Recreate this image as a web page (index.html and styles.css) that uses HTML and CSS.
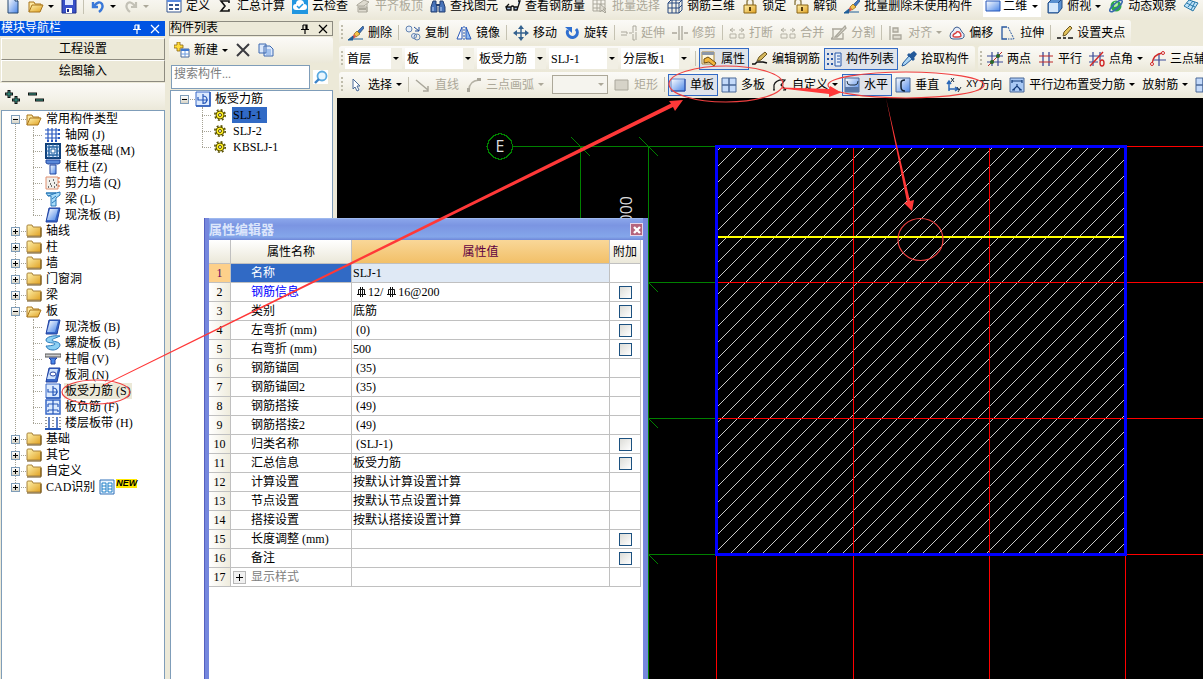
FILE: index.html
```html
<!DOCTYPE html>
<html lang="zh-CN">
<head>
<meta charset="utf-8">
<title>板受力筋</title>
<link rel="stylesheet" href="styles.css">
</head>
<body>
<svg class="defs" aria-hidden="true">
<defs>
<linearGradient id="blue" x1="0" y1="0" x2="1" y2="1"><stop offset="0" stop-color="#fff"/><stop offset="1" stop-color="#4a86e8"/></linearGradient>
<linearGradient id="gold" x1="0" y1="0" x2="1" y2="1"><stop offset="0" stop-color="#fff3b0"/><stop offset="1" stop-color="#e0a020"/></linearGradient>
<symbol id="new" viewBox="0 0 16 16"><path d="M3 0h7l3 3v12H3z" fill="url(#blue)" stroke="#24476f"/><path d="M10 0v3h3" fill="#fff" stroke="#24476f"/></symbol>
<symbol id="open" viewBox="0 0 16 16"><path d="M1 14V4h5l1 2h6v3" fill="#ffe9a0" stroke="#a8741a"/><path d="M1 14l3-7h11l-3 7z" fill="url(#gold)" stroke="#a8741a"/></symbol>
<symbol id="save" viewBox="0 0 16 16"><path d="M1 1h14v14H1z" fill="#3850c8" stroke="#1c2c88"/><path d="M4 1h8v6H4z" fill="#dfe8ff"/><path d="M5 10h6v5H5z" fill="#fff"/><path d="M6 11h2v3H6z" fill="#1c2c88"/></symbol>
<symbol id="undo" viewBox="0 0 16 16"><path d="M3 4v5h5M4 8q5-6 8-2q2 4-3 8" fill="none" stroke="#3a78d8" stroke-width="2.4"/></symbol>
<symbol id="redo" viewBox="0 0 16 16"><path d="M13 4v5H8M12 8Q7 2 4 6q-2 4 3 8" fill="none" stroke="#c3c1b6" stroke-width="2.2"/></symbol>
<symbol id="form" viewBox="0 0 16 16"><path d="M1 1h14v13H1z" fill="#fff" stroke="#35558f"/><path d="M1 1h14v3H1z" fill="#5b8be0"/><path d="M3 7h4M9 7h4M3 11h4M9 11h4" stroke="#35558f" stroke-width="2"/></symbol>
<symbol id="sigma" viewBox="0 0 16 16"><path d="M12 5V3H4l4 5-4 5h8v-2" fill="none" stroke="#111" stroke-width="1.6"/></symbol>
<symbol id="cloud" viewBox="0 0 16 16"><path d="M0 0h16v16H0z" fill="#2196e0"/><path d="M4 12a3 3 0 0 1 0-6 4 4 0 0 1 8 0 3 3 0 0 1 0 6z" fill="#fff"/><path d="M5 8l2 2 4-4" fill="none" stroke="#2196e0" stroke-width="1.5"/></symbol>
<symbol id="flush" viewBox="0 0 16 16"><path d="M2 7l7-5 5 2-5 4H2zM3 9h9v5H3zM12 6v8" fill="#dedbd0" stroke="#aaa79b"/><path d="M4 11h7" stroke="#aaa79b" stroke-width="2"/></symbol>
<symbol id="find" viewBox="0 0 16 16"><path d="M3 3h3v3l1 3v5H1V9zM10 3h3l2 6v5H9V9l1-3z" fill="#4772b8" stroke="#243f70"/><path d="M6 7h4" stroke="#243f70" stroke-width="2"/><path d="M3 9v4M11 9v4" stroke="#bcd2f8"/></symbol>
<symbol id="glasses" viewBox="0 0 16 16"><path d="M1 9h5v3H2zM9 9h4l-1 3H9zM6 9q1.500-2 3 0M1 9l3-3M13 9l2-6h-2" fill="#9ab6e0" stroke="#111" stroke-width="1.300"/></symbol>
<symbol id="batch" viewBox="0 0 16 16"><path d="M1 2h12v11H1zM1 6h12M1 10h12M5 2v11M9 2v11" fill="none" stroke="#aaa79b"/><path d="M8 6v8l2-2 3 3 1-1-3-3h3z" fill="#dedbd0" stroke="#aaa79b"/></symbol>
<symbol id="cube3" viewBox="0 0 16 16"><path d="M1 5l3-3h11v10l-3 3H1zM1 5h11v10M12 5l3-3M1 10h11l3-3M5 2v13M9 2v13" fill="none" stroke="#28487e"/></symbol>
<symbol id="lock" viewBox="0 0 16 16"><path d="M5 7V4q0-3 3-3t3 3v3" fill="none" stroke="#9a8a5a" stroke-width="1.600"/><path d="M2 7h12v8H2z" fill="url(#gold)" stroke="#8a6414"/><path d="M8 9v4" stroke="#5a4010" stroke-width="2"/></symbol>
<symbol id="unlock" viewBox="0 0 16 16"><path d="M2 7V4q0-3 3-3t3 3v3" fill="none" stroke="#9a8a5a" stroke-width="1.600"/><path d="M4 7h11v8H4z" fill="url(#gold)" stroke="#8a6414"/><path d="M9 9v4" stroke="#5a4010" stroke-width="2"/></symbol>
<symbol id="brush" viewBox="0 0 16 16"><path d="M15 1L9 7l2 2 5-6z" fill="#3f74c0" stroke="#24476f" stroke-width=".7"/><path d="M9 6L6 9l2 3 4-3z" fill="#f5c24a" stroke="#8a6414" stroke-width=".7"/><path d="M6 9l-2 3 1 2 3-2z" fill="#e05a4a"/><path d="M0 15l5-4v4zM6 14h9" fill="#1f5f98" stroke="#1f5f98"/></symbol>
<symbol id="plane" viewBox="0 0 16 16"><path d="M1 3h14v10H1z" fill="url(#blue)" stroke="#2858b8"/></symbol>
<symbol id="topv" viewBox="0 0 16 16"><path d="M1 5l4-4h10v9l-4 5H1z" fill="#5a90d0" stroke="#234a80"/><path d="M2 5h9v9H2z" fill="#d6e8fb"/><path d="M11 5l4-4" stroke="#234a80"/></symbol>
<symbol id="orbit" viewBox="0 0 16 16"><circle cx="8" cy="8" r="5.500" fill="#2ea84a"/><path d="M6 4q4-1 4 2t-4 3z" fill="#b6f0a0"/><ellipse cx="8" cy="8" rx="8" ry="2.500" fill="none" stroke="#3a68b0" stroke-width="1.500" transform="rotate(-42 8 8)"/></symbol>
<symbol id="gem" viewBox="0 0 16 16"><path d="M1 8l5-6 9 3-5 8zM3.500 5l8.500 4M5 9l5-6M8 12l4-8" fill="#bfe2f8" stroke="#2878a8"/></symbol>
<symbol id="copy" viewBox="0 0 16 16"><circle cx="4" cy="4" r="3" fill="#e5edf8" stroke="#6484b0"/><circle cx="9" cy="11" r="2.500" fill="#e5edf8" stroke="#6484b0"/><circle cx="12" cy="12" r="3" fill="none" stroke="#6484b0"/><path d="M9 2l5 4M14 2v4h-4" stroke="#24509a" fill="none"/></symbol>
<symbol id="mirror" viewBox="0 0 16 16"><path d="M6 2v12H1z" fill="#fff" stroke="#2858b8"/><path d="M10 2v12h5z" fill="#8cb8f0" stroke="#2858b8"/><path d="M8 1v14" stroke="#2858b8" stroke-dasharray="2 1"/></symbol>
<symbol id="move" viewBox="0 0 16 16"><path d="M8 2v12M2 8h12" stroke="#34618e" stroke-width="1.500"/><path d="M8 0l3 4H5zM8 16l3-4H5zM0 8l4-3v6zM16 8l-4-3v6z" fill="#34618e"/></symbol>
<symbol id="rotate" viewBox="0 0 16 16"><path d="M4 5a5 5 0 1 0 8-1" fill="none" stroke="#2f6fd0" stroke-width="3"/><path d="M1 2h7v6z" fill="#2f6fd0"/></symbol>
<symbol id="extend" viewBox="0 0 16 16"><path d="M0 7h6v3H0M8 8h3M12 1h3v14h-3z" fill="none" stroke="#aaa79b" stroke-dasharray="8 1"/></symbol>
<symbol id="trim" viewBox="0 0 16 16"><path d="M7 1v14M10 1v14M0 8h5M12 8h4" fill="none" stroke="#aaa79b" stroke-width="1.300"/></symbol>
<symbol id="split" viewBox="0 0 16 16"><path d="M1 9h6v4H1zM10 9h5v4h-5zM1 5h5M10 5h5M4 3L1 5l3 2M12 3l3 2-3 2" fill="none" stroke="#b5b2a5"/></symbol>
<symbol id="cut" viewBox="0 0 16 16"><path d="M1 4h10M2 4v8l-2 2h12V8M4 12L14 1l1 2-9 9z" fill="none" stroke="#aaa79b" stroke-width="1.300"/></symbol>
<symbol id="align" viewBox="0 0 16 16"><path d="M2 1v14M5 3h5v4H5zM5 10h8v4H5z" fill="#dedbd0" stroke="#aaa79b" stroke-width="1.300"/></symbol>
<symbol id="offset" viewBox="0 0 16 16"><path d="M1 11q0-4 3-5 1-4 4-4t5 5q3 2 2 5-1 2-5 2H4q-3 0-3-3z" fill="#e8eef8" stroke="#3c5c90"/><path d="M4 11q0-2 3-3 1-2 3-1t2 4q-1 1-3 1H6q-2 0-2-1z" fill="#fff" stroke="#d84040" stroke-width="1.400"/></symbol>
<symbol id="stretch" viewBox="0 0 16 16"><path d="M7 2H2v12h5" fill="none" stroke="#2858a0" stroke-width="1.300"/><path d="M8 2l6 12H8" fill="none" stroke="#2858a0" stroke-dasharray="2 1"/></symbol>
<symbol id="pencil" viewBox="0 0 16 16"><path d="M0 13h4M6 13h3M11 13h5" stroke="#111" stroke-width="1.500"/><path d="M6 11l1-4 6-6 2 2-6 7z" fill="#e5c45c" stroke="#6a5520"/></symbol>
<symbol id="props" viewBox="0 0 16 16"><path d="M1 1h12v12H1z" fill="#fff8e0" stroke="#a8843a"/><path d="M1 1h12v3H1z" fill="#8c96a8"/><path d="M3 8l4-2 3 2 5 4-2 3-5-4-5 1z" fill="#f2b53a" stroke="#6d4a10"/></symbol>
<symbol id="editbar" viewBox="0 0 16 16"><path d="M0 13h3l2-2h6l4 1" stroke="#111" fill="none" stroke-width="1.500"/><path d="M5 10l2-4 6-5 2 2-6 6z" fill="#d4b75c" stroke="#6a5520"/></symbol>
<symbol id="complist" viewBox="0 0 16 16"><path d="M1 3h2M1 8h2M1 13h2M5 3h2M5 8h2M5 13h2" stroke="#2858a8" stroke-width="2"/><path d="M9 2h6v13H9z" fill="#e5eefa" stroke="#2858a8"/><path d="M11 5h3M11 8h3M11 11h3" stroke="#2858a8"/></symbol>
<symbol id="dropper" viewBox="0 0 16 16"><path d="M9 3l4-3 3 3-3 4 1 1-2 2-6-6 2-2z" fill="#245a9a"/><path d="M8 5L2 12l-1 3 3-1 7-6z" fill="#a8d4f4" stroke="#245a9a"/></symbol>
<symbol id="ax2" viewBox="0 0 16 16"><path d="M5 1v14M11 1v14M0 5h16M0 11h16" stroke="#3a4a98" stroke-width="1.200"/><path d="M1 15L15 1" stroke="#c02828"/><circle cx="5" cy="11" r="2" fill="#286828"/><circle cx="11" cy="5" r="2" fill="#286828"/></symbol>
<symbol id="axp" viewBox="0 0 16 16"><path d="M5 1v14M11 1v14" stroke="#3a4a98" stroke-width="1.300"/><path d="M1 5h14M1 11h14" stroke="#c02828" stroke-width="1.200"/></symbol>
<symbol id="axa" viewBox="0 0 16 16"><path d="M4 1v14M11 1v9M0 5h15M0 11h9" stroke="#3a4a98" stroke-width="1.200"/><path d="M1 15L14 1" stroke="#d02828" stroke-width="1.400"/><ellipse cx="13" cy="12" rx="2" ry="3" fill="none" stroke="#d02828" stroke-width="1.400"/></symbol>
<symbol id="ax3" viewBox="0 0 16 16"><path d="M9 3v12M3 9h13" stroke="#3a4a98" stroke-width="1.200"/><path d="M2 13Q3 3 13 2" fill="none" stroke="#d02828" stroke-width="1.400"/><circle cx="2" cy="13" r="1.500" fill="#fff" stroke="#d02828"/><circle cx="13" cy="2" r="1.500" fill="#fff" stroke="#d02828"/></symbol>
<symbol id="cursor" viewBox="0 0 16 16"><path d="M5 2v10l2-2 2 4 2-1-2-4h3z" fill="#fff" stroke="#4a6a98"/></symbol>
<symbol id="line" viewBox="0 0 16 16"><path d="M1 3l12 10M13 9v5H8" fill="none" stroke="#aaa79b" stroke-width="1.500"/></symbol>
<symbol id="arc" viewBox="0 0 16 16"><path d="M3 13Q3 4 13 3" fill="none" stroke="#b5b2a5" stroke-width="1.600"/><path d="M1 11h3v4H1zM11 1h4v3h-4z" fill="#aaa79b"/></symbol>
<symbol id="rect" viewBox="0 0 16 16"><path d="M1 3h13v10H1z" fill="#d6d3c8" stroke="#aaa79b"/></symbol>
<symbol id="single" viewBox="0 0 16 16"><path d="M1 2h14v12H1z" fill="url(#blue)" stroke="#6484c8"/><path d="M15 2v12H1" fill="none" stroke="#1c40a0"/></symbol>
<symbol id="multi" viewBox="0 0 16 16"><path d="M1 1h14v14H1z" fill="#c4dafa" stroke="#4a6898"/><path d="M8 1v14M1 8h14" stroke="#4a6898" stroke-width="1.500"/></symbol>
<symbol id="custom" viewBox="0 0 16 16"><path d="M2 13V8q2-6 11-5l-4 5 5 5M3 13H1M14 13h-3" fill="none" stroke="#111" stroke-width="1.200"/></symbol>
<symbol id="horiz" viewBox="0 0 16 16"><path d="M1 1h14v14H1z" fill="url(#blue)" stroke="#4a6898"/><path d="M1 10h14v5H1z" fill="#5878a8"/><path d="M3 4q0 4 3 4h5q3 0 3-4" fill="none" stroke="#234"/></symbol>
<symbol id="vert" viewBox="0 0 16 16"><path d="M1 1h14v14H1z" fill="url(#blue)" stroke="#4a6898"/><path d="M10 3Q6 3 6 6v4q0 4 4 4" fill="none" stroke="#123" stroke-width="1.500"/></symbol>
<symbol id="xy" viewBox="0 0 16 16"><path d="M3 14V5M3 12h8M1 7l2-3 2 3M9 10l3 2-3 2" fill="none" stroke="#2a68b8" stroke-width="1.500"/><path d="M5 1l3 4M8 1L5 5M11 10l2 3M15 10l-3 5" stroke="#234"/></symbol>
<symbol id="edge" viewBox="0 0 16 16"><path d="M1 1h14v14H1z" fill="#a8c8f4" stroke="#4a6898"/><path d="M3 4h10M3 3v3M13 3v3M8 7v3M4 13l4-4 4 4M3 13h3M10 13h3" fill="none" stroke="#123a78" stroke-width="1.200"/></symbol>
<symbol id="addcomp" viewBox="0 0 16 16"><path d="M4 0h2v3h3v3H6v3H3V6H0V3h3V0z" fill="#ffdc3c" stroke="#8a6414" stroke-width=".8"/><path d="M7 7h8v8H7z" fill="#fff" stroke="#4a6898"/><path d="M7 7h8v2H7z" fill="#3f78d0"/><path d="M7 12h8M11 9v6" stroke="#6c9ce0"/></symbol>
<symbol id="del" viewBox="0 0 16 16"><path d="M2 2l12 12M14 2L2 14" stroke="#3b3b40" stroke-width="2"/></symbol>
<symbol id="pages" viewBox="0 0 16 16"><path d="M1 2h7v9H1zM6 4h6l3 3v7H6z" fill="#dbe8fb" stroke="#3c68b0"/><path d="M8 8h5M8 10h5M8 12h5" stroke="#6c9ce0"/></symbol>
<symbol id="lens" viewBox="0 0 16 16"><path d="M0 1h15v14H0z" fill="#fff"/><circle cx="9" cy="7" r="4.500" fill="#e8f6ff" stroke="#5aaae0" stroke-width="1.800"/><path d="M6 10l-4 4" stroke="#3c84c8" stroke-width="2.400"/></symbol>
<symbol id="pin" viewBox="0 0 10 10"><path d="M3 1h4v4M3 1v4M1 5.500h8M6 1v4M5 6v4" fill="none" stroke="currentColor" stroke-width="1.200"/></symbol>
<symbol id="x" viewBox="0 0 10 10"><path d="M1 1l8 8M9 1L1 9" stroke="currentColor" stroke-width="1.200"/></symbol>
<symbol id="xbold" viewBox="0 0 10 10"><path d="M2 2l6 6M8 2L2 8" stroke="currentColor" stroke-width="2.400"/></symbol>
<symbol id="pluses" viewBox="0 0 16 16"><path d="M4 1v8M0 5h8M11 7v8M7 11h8" stroke="#111" stroke-width="3"/><path d="M4 2v6M1 5h6M11 8v6M8 11h6" stroke="#3aa090"/></symbol>
<symbol id="minuses" viewBox="0 0 16 16"><path d="M0 5h9M7 11h9" stroke="#111" stroke-width="3"/><path d="M1 5h7M8 11h7" stroke="#3aa090"/></symbol>
<symbol id="folder" viewBox="0 0 16 16"><path d="M1 13V3q0-1 1-1h4l1 2h8v9z" fill="url(#gold)" stroke="#a8823a"/><path d="M1 14h14V5" fill="none" stroke="#6a4c14"/></symbol>
<symbol id="grid" viewBox="0 0 16 16"><path d="M3 1v14M7 1v14M11 1v14M0 3h15M0 7h15M0 11h15" stroke="#2858c0" stroke-width="1.200"/><path d="M13 2h2v2h-2zM13 6h2v2h-2zM13 10h2v2h-2zM2 13h2v2H2zM6 13h2v2H6zM10 13h2v2h-2z" fill="#2858c0"/></symbol>
<symbol id="raft" viewBox="0 0 16 16"><path d="M1 1h14v14H1z" fill="#dcebff" stroke="#10407a" stroke-width="2"/><path d="M4 4h8v8H4zM4 1v14M12 1v14M1 4h14M1 12h14M8 1v3M8 12v3M1 8h3M12 8h3" fill="none" stroke="#2060a0"/><path d="M6 6h4v4H6z" fill="#fff" stroke="#2060a0"/></symbol>
<symbol id="column" viewBox="0 0 16 16"><path d="M1 1h14v3l-2 1H3L1 4z" fill="#5a88d8" stroke="#2448a0"/><path d="M5 6h6v9H5z" fill="url(#blue)" stroke="#2448a0"/></symbol>
<symbol id="wall" viewBox="0 0 16 16"><path d="M1 2h12v12H1z" fill="#f0efeb" stroke="#e09070"/><path d="M13 3h2M13 7h2M13 11h2" stroke="#d06030"/><path d="M3 12h1M6 11h1M9 12h1M5 9h1M9 8h1M4 6h1M8 5h1M11 10h1" stroke="#444" stroke-width="1.500"/></symbol>
<symbol id="beam" viewBox="0 0 16 16"><path d="M1 2l2 3h3v10h5V7l4-3V1l-4 1z" fill="#a8dcfa" stroke="#2878b8"/><path d="M1 2h10l-8 3M7 8l4-3M7 12l4-3" fill="none" stroke="#2878b8"/></symbol>
<symbol id="slab" viewBox="0 0 16 16"><path d="M4 1h11l-3 14H1z" fill="#3868c8" stroke="#2040a0"/><path d="M5 2h8l-3 11H2z" fill="url(#blue)"/></symbol>
<symbol id="spiral" viewBox="0 0 16 16"><path d="M15 1C8 0 1 2 1 5c0 4 9 2 9 4 0 1-5 2-9 2 1 3 4 4 7 4 4 0 7-3 7-5 0-4-8-3-8-5 0-1 4-2 8-4z" fill="#8cd0f4" stroke="#2878b8"/></symbol>
<symbol id="cap" viewBox="0 0 16 16"><path d="M0 3h16v3H0z" fill="#ccc" stroke="#555"/><path d="M4 7h8l-2 2v4H6V9z" fill="#4a88e8" stroke="#2040a0"/></symbol>
<symbol id="hole" viewBox="0 0 16 16"><path d="M4 1h11l-3 14H1z" fill="#3868c8" stroke="#2040a0"/><path d="M5 2h8l-3 10H2z" fill="#cfe2fc"/><ellipse cx="8" cy="7" rx="3" ry="2" fill="#fff" stroke="#2040a0"/></symbol>
<symbol id="bars" viewBox="0 0 16 16"><path d="M1 1h14v14H1z" fill="#dceafe" stroke="#3868c8"/><path d="M3 6v3h10M8 3v10M8 5q4 0 4 4-1 4-4 3" fill="none" stroke="#2858b8" stroke-width="1.200"/><path d="M1 15h14V1" fill="none" stroke="#2858b8" stroke-width="1.500"/></symbol>
<symbol id="neg" viewBox="0 0 16 16"><path d="M1 1h14v14H1z" fill="#dceafe" stroke="#3868c8" stroke-width="1.500"/><path d="M8 1v14M3 5h10M3 11h10M3 5v3M13 5v3M3 11v2M13 11v2" fill="none" stroke="#2858b8" stroke-width="1.200"/></symbol>
<symbol id="band" viewBox="0 0 16 16"><path d="M4 2v11M12 2v11" stroke="#2858b8" stroke-width="1.500"/><path d="M1 2v11M8 2v11M15 2v11" stroke="#333" stroke-dasharray="1 2"/><path d="M0 14h16" stroke="#2858b8" stroke-width="2"/></symbol>
<symbol id="cad" viewBox="0 0 16 16"><path d="M1 1h14v14H1z" fill="#e8f4ff" stroke="#3070b8"/><path d="M3 4h4v9H3zM9 4h4v9H9zM3 7h4M3 10h4M9 7h4M9 10h4" fill="#fff" stroke="#2080c8"/></symbol>
<symbol id="gear" viewBox="0 0 12 12"><circle cx="6" cy="6" r="4" fill="#ffee20" stroke="#5a5200" stroke-width="1"/><circle cx="6" cy="6" r="5.200" fill="none" stroke="#5a5200" stroke-width="1.600" stroke-dasharray="2 2.080"/><circle cx="6" cy="6" r="1.500" fill="#fff" stroke="#5a5200"/></symbol>
<symbol id="rebar" viewBox="0 0 12 12"><path d="M2.500 3.500h6v5h-6zM4.500 1v10M6.500 1v10M1 8.500h9" fill="none" stroke="#111"/></symbol>
<pattern id="hatch" width="16" height="16" patternUnits="userSpaceOnUse" patternTransform="translate(1 0)"><path d="M-1 1L1-1M0 16L16 0M15 17L17 15" stroke="#c8c8c8" stroke-width="1"/></pattern>
</defs>
</svg>

<header class="bar bar-top">
  <button class="tool" aria-label="新建"><svg class="ic"><use href="#new"/></svg></button>
  <button class="tool" aria-label="打开"><svg class="ic"><use href="#open"/></svg><i class="arrow"></i></button>
  <button class="tool" aria-label="保存"><svg class="ic"><use href="#save"/></svg></button>
  <i class="sep"></i>
  <button class="tool" aria-label="撤销"><svg class="ic"><use href="#undo"/></svg><i class="arrow"></i></button>
  <button class="tool off" aria-label="恢复"><svg class="ic"><use href="#redo"/></svg><i class="arrow"></i></button>
  <i class="edge"></i>
  <button class="tool"><svg class="ic"><use href="#form"/></svg>定义</button>
  <button class="tool"><svg class="ic"><use href="#sigma"/></svg>汇总计算</button>
  <button class="tool"><svg class="ic"><use href="#cloud"/></svg>云检查</button>
  <button class="tool off"><svg class="ic"><use href="#flush"/></svg>平齐板顶</button>
  <button class="tool"><svg class="ic"><use href="#find"/></svg>查找图元</button>
  <button class="tool"><svg class="ic"><use href="#glasses"/></svg>查看钢筋量</button>
  <button class="tool off"><svg class="ic"><use href="#batch"/></svg>批量选择</button>
  <button class="tool"><svg class="ic"><use href="#cube3"/></svg>钢筋三维</button>
  <button class="tool"><svg class="ic"><use href="#lock"/></svg>锁定</button>
  <button class="tool"><svg class="ic"><use href="#unlock"/></svg>解锁</button>
  <button class="tool"><svg class="ic"><use href="#brush"/></svg>批量删除未使用构件</button>
  <label class="combo combo-view"><svg class="ic"><use href="#plane"/></svg><select aria-label="视图"><option>二维</option></select><i class="arrow"></i></label>
  <button class="tool"><svg class="ic"><use href="#topv"/></svg>俯视<i class="arrow"></i></button>
  <button class="tool"><svg class="ic"><use href="#orbit"/></svg>动态观察</button>
  <button class="tool" aria-label="局部三维"><svg class="ic"><use href="#gem"/></svg></button>
</header>

<main class="work">
  <aside class="panel">
    <h2 class="caption active">模块导航栏<svg class="mini"><use href="#pin"/></svg><svg class="mini"><use href="#x"/></svg></h2>
    <div class="modes"><button class="mode">工程设置</button><button class="mode">绘图输入</button></div>
    <div class="bar bar-nav"><button class="tool" aria-label="全部展开"><svg class="ic"><use href="#pluses"/></svg></button><button class="tool" aria-label="全部折叠"><svg class="ic"><use href="#minuses"/></svg></button></div>
    <div class="pane">
      <ul class="tree">
        <li><div class="node"><i class="exp"></i><svg class="ic"><use href="#open"/></svg>常用构件类型</div>
          <ul class="kids">
            <li class="leaf"><svg class="ic"><use href="#grid"/></svg><span>轴网 (J)</span></li>
            <li class="leaf"><svg class="ic"><use href="#raft"/></svg><span>筏板基础 (M)</span></li>
            <li class="leaf"><svg class="ic"><use href="#column"/></svg><span>框柱 (Z)</span></li>
            <li class="leaf"><svg class="ic"><use href="#wall"/></svg><span>剪力墙 (Q)</span></li>
            <li class="leaf"><svg class="ic"><use href="#beam"/></svg><span>梁 (L)</span></li>
            <li class="leaf"><svg class="ic"><use href="#slab"/></svg><span>现浇板 (B)</span></li>
          </ul></li>
        <li><div class="node"><i class="exp plus"></i><svg class="ic"><use href="#folder"/></svg>轴线</div></li>
        <li><div class="node"><i class="exp plus"></i><svg class="ic"><use href="#folder"/></svg>柱</div></li>
        <li><div class="node"><i class="exp plus"></i><svg class="ic"><use href="#folder"/></svg>墙</div></li>
        <li><div class="node"><i class="exp plus"></i><svg class="ic"><use href="#folder"/></svg>门窗洞</div></li>
        <li><div class="node"><i class="exp plus"></i><svg class="ic"><use href="#folder"/></svg>梁</div></li>
        <li><div class="node"><i class="exp"></i><svg class="ic"><use href="#open"/></svg>板</div>
          <ul class="kids">
            <li class="leaf"><svg class="ic"><use href="#slab"/></svg><span>现浇板 (B)</span></li>
            <li class="leaf"><svg class="ic"><use href="#spiral"/></svg><span>螺旋板 (B)</span></li>
            <li class="leaf"><svg class="ic"><use href="#cap"/></svg><span>柱帽 (V)</span></li>
            <li class="leaf"><svg class="ic"><use href="#hole"/></svg><span>板洞 (N)</span></li>
            <li class="leaf"><svg class="ic"><use href="#bars"/></svg><span class="current">板受力筋 (S)</span></li>
            <li class="leaf"><svg class="ic"><use href="#neg"/></svg><span>板负筋 (F)</span></li>
            <li class="leaf"><svg class="ic"><use href="#band"/></svg><span>楼层板带 (H)</span></li>
          </ul></li>
        <li><div class="node"><i class="exp plus"></i><svg class="ic"><use href="#folder"/></svg>基础</div></li>
        <li><div class="node"><i class="exp plus"></i><svg class="ic"><use href="#folder"/></svg>其它</div></li>
        <li><div class="node"><i class="exp plus"></i><svg class="ic"><use href="#folder"/></svg>自定义</div></li>
        <li><div class="node"><i class="exp plus"></i><svg class="ic"><use href="#folder"/></svg>CAD识别<svg class="ic"><use href="#cad"/></svg><b class="fresh">NEW</b></div></li>
      </ul>
    </div>
  </aside>

  <aside class="panel">
    <h2 class="caption">构件列表<svg class="mini"><use href="#pin"/></svg><svg class="mini"><use href="#x"/></svg></h2>
    <div class="bar bar-list">
      <button class="tool"><svg class="ic"><use href="#addcomp"/></svg>新建<i class="arrow"></i></button>
      <button class="tool" aria-label="删除"><svg class="ic"><use href="#del"/></svg></button>
      <button class="tool" aria-label="复制"><svg class="ic"><use href="#pages"/></svg></button>
    </div>
    <form class="search"><input type="text" aria-label="搜索构件" placeholder="搜索构件..."><button type="button" class="tool" aria-label="搜索"><svg class="ic"><use href="#lens"/></svg></button></form>
    <div class="pane">
      <ul class="tree parts">
        <li><div class="node"><i class="exp"></i><svg class="ic"><use href="#bars"/></svg>板受力筋</div>
          <ul class="kids">
            <li class="leaf"><svg class="gear"><use href="#gear"/></svg><span class="picked">SLJ-1</span></li>
            <li class="leaf"><svg class="gear"><use href="#gear"/></svg><span>SLJ-2</span></li>
            <li class="leaf"><svg class="gear"><use href="#gear"/></svg><span>KBSLJ-1</span></li>
          </ul></li>
      </ul>
    </div>
  </aside>

  <section class="stage">
    <div class="dock"><div class="bar">
      <i class="grip"></i>
      <button class="tool"><svg class="ic"><use href="#brush"/></svg>删除</button><i class="sep"></i>
      <button class="tool"><svg class="ic"><use href="#copy"/></svg>复制</button>
      <button class="tool"><svg class="ic"><use href="#mirror"/></svg>镜像</button><i class="sep"></i>
      <button class="tool"><svg class="ic"><use href="#move"/></svg>移动</button>
      <button class="tool"><svg class="ic"><use href="#rotate"/></svg>旋转</button><i class="sep"></i>
      <button class="tool off"><svg class="ic"><use href="#extend"/></svg>延伸</button>
      <button class="tool off"><svg class="ic"><use href="#trim"/></svg>修剪</button><i class="sep"></i>
      <button class="tool off"><svg class="ic"><use href="#split"/></svg>打断</button>
      <button class="tool off"><svg class="ic"><use href="#split"/></svg>合并</button>
      <button class="tool off"><svg class="ic"><use href="#cut"/></svg>分割</button><i class="sep"></i>
      <button class="tool off"><svg class="ic"><use href="#align"/></svg>对齐<i class="arrow"></i></button>
      <button class="tool"><svg class="ic"><use href="#offset"/></svg>偏移</button>
      <button class="tool"><svg class="ic"><use href="#stretch"/></svg>拉伸</button><i class="sep"></i>
      <button class="tool"><svg class="ic"><use href="#pencil"/></svg>设置夹点</button>
    </div></div>
    <div class="dock"><div class="bar">
      <i class="grip"></i>
      <label class="combo short"><select aria-label="楼层"><option>首层</option></select><i class="arrow"></i></label>
      <label class="combo"><select aria-label="构件类别"><option>板</option></select><i class="arrow"></i></label>
      <label class="combo"><select aria-label="构件类型"><option>板受力筋</option></select><i class="arrow"></i></label>
      <label class="combo"><select aria-label="构件"><option>SLJ-1</option></select><i class="arrow"></i></label>
      <label class="combo"><select aria-label="分层"><option>分层板1</option></select><i class="arrow"></i></label>
      <i class="sep"></i>
      <button class="tool on"><svg class="ic"><use href="#props"/></svg>属性</button>
      <button class="tool"><svg class="ic"><use href="#editbar"/></svg>编辑钢筋</button>
      <button class="tool on"><svg class="ic"><use href="#complist"/></svg>构件列表</button>
      <button class="tool"><svg class="ic"><use href="#dropper"/></svg>拾取构件</button>
      </div><div class="bar grow">
      <i class="grip"></i>
      <button class="tool"><svg class="ic"><use href="#ax2"/></svg>两点</button>
      <button class="tool"><svg class="ic"><use href="#axp"/></svg>平行</button>
      <button class="tool"><svg class="ic"><use href="#axa"/></svg>点角<i class="arrow"></i></button>
      <button class="tool"><svg class="ic"><use href="#ax3"/></svg>三点辅轴</button>
    </div></div>
    <div class="dock"><div class="bar grow">
      <i class="grip"></i>
      <button class="tool"><svg class="ic"><use href="#cursor"/></svg>选择<i class="arrow"></i></button><i class="sep"></i>
      <button class="tool off"><svg class="ic"><use href="#line"/></svg>直线</button>
      <button class="tool off"><svg class="ic"><use href="#arc"/></svg>三点画弧<i class="arrow"></i></button>
      <label class="combo blank"><select aria-label="画弧方式" disabled><option></option></select><i class="arrow"></i></label>
      <button class="tool off"><svg class="ic"><use href="#rect"/></svg>矩形</button><i class="sep"></i>
      <button class="tool on"><svg class="ic"><use href="#single"/></svg>单板</button>
      <button class="tool"><svg class="ic"><use href="#multi"/></svg>多板</button>
      <button class="tool"><svg class="ic"><use href="#custom"/></svg>自定义<i class="arrow"></i></button>
      <button class="tool on"><svg class="ic"><use href="#horiz"/></svg>水平</button>
      <button class="tool"><svg class="ic"><use href="#vert"/></svg>垂直</button>
      <button class="tool"><svg class="ic"><use href="#xy"/></svg><span class="axis">XY</span>方向</button>
      <button class="tool"><svg class="ic"><use href="#edge"/></svg>平行边布置受力筋<i class="arrow"></i></button>
      <button class="tool">放射筋<i class="arrow"></i></button>
      <button class="tool" aria-label="布置"><svg class="ic"><use href="#multi"/></svg></button>
    </div></div>
    <div class="canvas">
      <svg class="drawing" role="img" aria-label="平面图">
        <g fill="none" stroke="#008000" shape-rendering="crispEdges">
          <path d="M176 48.500H380M243.500 48V200M311.500 48V1200M311 184.500H380M311 320.500H380M311 456.500H380"/>
          <path d="M234 39l19 19M302 39l19 19M311 184l10 10M311 320l10 10M311 456l10 10"/>
          <path d="M163 35.500l6 2 5 5 2 6-2 6-5 5-6 2-6-2-5-5-2-6 2-6 5-5z"/>
        </g>
        <text x="163" y="54" text-anchor="middle" class="mark">E</text>
        <text transform="translate(295 98) rotate(-90)" text-anchor="end" class="mark">3000</text>
        <rect x="380" y="49" width="409" height="407" fill="url(#hatch)" shape-rendering="crispEdges"/>
        <path d="M789 48.500H3000M380 184.500H3000M380 320.500H3000M789 456.500H3000M379.500 456V2000M516.500 48V2000M652.500 48V2000M788.500 456V2000" stroke="#f00" fill="none" shape-rendering="crispEdges"/>
        <path d="M381 139H788" stroke="#ff0" stroke-width="2" shape-rendering="crispEdges"/>
        <path d="M379.500 48.500H788.500V456.500H379.500z" fill="none" stroke="#00f" stroke-width="3" shape-rendering="crispEdges"/>
      </svg>
    </div>
  </section>
</main>

<section class="dialog">
  <h2 class="dialog-title">属性编辑器<button class="close" aria-label="关闭"><svg class="mini"><use href="#xbold"/></svg></button></h2>
  <div class="sheet">
    <table class="props">
      <colgroup><col class="c-num"><col class="c-name"><col><col class="c-add"></colgroup>
      <thead><tr><th></th><th>属性名称</th><th class="hot">属性值</th><th>附加</th></tr></thead>
      <tbody>
        <tr class="sel"><th>1</th><td>名称</td><td>SLJ-1</td><td></td></tr>
        <tr><th>2</th><td class="link">钢筋信息</td><td><span class="ind"><svg class="rebar"><use href="#rebar"/></svg>12/ <svg class="rebar"><use href="#rebar"/></svg>16@200</span></td><td><input type="checkbox" aria-label="附加 钢筋信息"></td></tr>
        <tr><th>3</th><td>类别</td><td>底筋</td><td><input type="checkbox" aria-label="附加 类别"></td></tr>
        <tr><th>4</th><td>左弯折 (mm)</td><td><span class="ind">(0)</span></td><td><input type="checkbox" aria-label="附加 左弯折"></td></tr>
        <tr><th>5</th><td>右弯折 (mm)</td><td>500</td><td><input type="checkbox" aria-label="附加 右弯折"></td></tr>
        <tr><th>6</th><td>钢筋锚固</td><td><span class="ind">(35)</span></td><td></td></tr>
        <tr><th>7</th><td>钢筋锚固2</td><td><span class="ind">(35)</span></td><td></td></tr>
        <tr><th>8</th><td>钢筋搭接</td><td><span class="ind">(49)</span></td><td></td></tr>
        <tr><th>9</th><td>钢筋搭接2</td><td><span class="ind">(49)</span></td><td></td></tr>
        <tr><th>10</th><td>归类名称</td><td><span class="ind">(SLJ-1)</span></td><td><input type="checkbox" aria-label="附加 归类名称"></td></tr>
        <tr><th>11</th><td>汇总信息</td><td>板受力筋</td><td><input type="checkbox" aria-label="附加 汇总信息"></td></tr>
        <tr><th>12</th><td>计算设置</td><td>按默认计算设置计算</td><td></td></tr>
        <tr><th>13</th><td>节点设置</td><td>按默认节点设置计算</td><td></td></tr>
        <tr><th>14</th><td>搭接设置</td><td>按默认搭接设置计算</td><td></td></tr>
        <tr><th>15</th><td>长度调整 (mm)</td><td></td><td><input type="checkbox" aria-label="附加 长度调整"></td></tr>
        <tr><th>16</th><td>备注</td><td></td><td><input type="checkbox" aria-label="附加 备注"></td></tr>
        <tr><th>17</th><td class="group"><button class="unfold" aria-label="展开"></button>显示样式</td><td></td><td></td></tr>
      </tbody>
    </table>
  </div>
</section>

<svg class="notes" aria-hidden="true">
  <g fill="none" stroke="#f04040" stroke-width="1.200">
    <ellipse cx="96" cy="392" rx="34" ry="12"/>
    <ellipse cx="726" cy="84" rx="57" ry="18"/>
    <ellipse cx="906" cy="85" rx="78" ry="13"/>
    <ellipse cx="920.500" cy="239.500" rx="22.500" ry="21"/>
  </g>
  <g fill="#ff3838">
    <path d="M104 384.500L671 103.500 669 101 683 100 675 111 673 107 104 385.500z"/>
    <path d="M782 87.500L829 89 830 86 841 92.500 829 97 829 94 782 88.500z"/>
    <path d="M886 98L910 201 914 200 912 211 904 203 907 202z"/>
  </g>
</svg>
</body>
</html>
```
FILE: styles.css
```css
* { box-sizing: border-box; }
html, body { height: 100%; }
body {
  margin: 0;
  display: flex;
  flex-direction: column;
  position: relative;
  overflow: hidden;
  background: #ece9d8;
  color: #000;
  font: 12px/16px "Liberation Serif", "Noto Sans CJK SC", sans-serif;
}
button, input, select { font: inherit; color: inherit; }
h2, ul { margin: 0; padding: 0; font-size: 12px; font-weight: normal; list-style: none; }
.defs { position: absolute; width: 0; height: 0; }
.ic { width: 16px; height: 16px; flex: none; }
.mini { width: 10px; height: 10px; flex: none; }

/* toolbars */
.bar {
  display: flex;
  align-items: center;
  flex: none;
  height: 25px;
  padding: 0 2px;
  border-radius: 3px;
  background: linear-gradient(#fbfaf7, #f3f1e7 60%, #ebe8d9);
  white-space: nowrap;
}
.bar-top { height: 26px; margin-top: -7px; border-radius: 0; overflow: hidden; }
.grow { flex: 1 0 auto; }
.dock { display: flex; gap: 3px; height: 26px; padding: 0 0 1px 2px; overflow: hidden; }
.tool {
  display: flex;
  align-items: center;
  gap: 4px;
  flex: none;
  height: 22px;
  padding: 0 4px 0 3px;
  border: 0;
  background: none;
  white-space: nowrap;
}
.off { color: #aca899; }
.on { padding: 0 3px 0 1px; border: 1px solid #316ac5; background: #dfe3ea; }
.axis { margin-right: -4px; font: 10px/16px "Liberation Mono", monospace; }
.arrow {
  flex: none;
  width: 5px;
  height: 3px;
  border: solid transparent;
  border-width: 3px 3px 0;
  border-top-color: currentColor;
}
.sep { flex: none; width: 1px; height: 15px; margin: 0 3px 0 2px; background: #c5c2b2; }
.edge { flex: none; width: 10px; }
.grip {
  flex: none;
  width: 2px;
  height: 16px;
  margin-right: 2px;
  background: repeating-linear-gradient(#c0bdac 0 2px, transparent 2px 4px);
}
.combo {
  display: flex;
  align-items: center;
  flex: none;
  width: 69px;
  height: 21px;
  margin-right: 3px;
  padding-right: 3px;
  background: linear-gradient(to right, #fff 58px, #f1efe4 58px);
}
.combo select {
  flex: 1;
  min-width: 0;
  padding: 0 0 0 2px;
  border: 0;
  background: none;
  appearance: none;
}
.short { width: 57px; background: linear-gradient(to right, #fff 46px, #f1efe4 46px); }
.combo-view { width: 58px; margin: 0 3px 0 7px; padding-left: 2px; background: #fff; }
.blank { width: 56px; height: 19px; margin-left: 4px; border: 1px solid #aca899; background: #f5f4ee; color: #aca899; }

/* work area */
.work {
  display: grid;
  grid-template-columns: 165px 164px minmax(0, 1fr);
  column-gap: 4px;
  flex: 1;
  min-height: 0;
  padding-top: 1px;
}
.panel { display: flex; flex-direction: column; min-height: 0; padding-top: 1px; }
.caption {
  display: flex;
  align-items: center;
  gap: 8px;
  height: 15px;
  padding: 0 4px 0 0;
  border: 1px solid #8d8b80;
  line-height: 13px;
}
.caption .mini:first-of-type { margin-left: auto; }
.caption.active { border-color: #0054e3; background: #0054e3; color: #fff; }
.modes { padding: 2px 0 1px 1px; }
.mode {
  display: block;
  width: 100%;
  height: 22px;
  padding: 0;
  border: 1px solid;
  border-color: #fff #8d8b80 #8d8b80 #fff;
  background: #ece9d8;
}
.bar-nav { height: 27px; border-radius: 0; }
.bar-list { height: 26px; margin-top: 1px; }
.search { display: flex; align-items: center; height: 27px; padding: 1px 0 1px 2px; }
.search input {
  flex: 1;
  min-width: 0;
  height: 24px;
  padding: 0 2px 4px;
  border: 1px solid #7f9db9;
  background: #fff;
}
.search input::placeholder { color: #7d7d7d; }
.pane {
  flex: 1;
  min-height: 0;
  margin-left: 1px;
  border: 1px solid #7f9db9;
  border-bottom: 0;
  background: #fff;
}

/* trees */
.tree { position: relative; padding: 0 0 0 9px; }
.tree::before {
  content: "";
  position: absolute;
  top: 8px;
  bottom: 8px;
  left: 13px;
  border-left: 1px dotted #a5a294;
}
.node { display: flex; align-items: center; gap: 4px; height: 16px; white-space: nowrap; }
.exp {
  position: relative;
  flex: none;
  width: 9px;
  height: 9px;
  margin-right: 2px;
  border: 1px solid #7f9db9;
  background: linear-gradient(#000, #000) center / 5px 1px no-repeat, linear-gradient(#fff, #d8d4c6);
}
.exp.plus {
  background: linear-gradient(#000, #000) center / 5px 1px no-repeat, linear-gradient(#000, #000) center / 1px 5px no-repeat, linear-gradient(#fff, #d8d4c6);
}
.exp::after { content: ""; position: absolute; left: 9px; top: 3px; width: 5px; border-top: 1px dotted #a5a294; }
.kids { position: relative; margin-left: 22px; }
.kids::before { content: ""; position: absolute; top: 0; bottom: 8px; border-left: 1px dotted #a5a294; }
.leaf { display: flex; align-items: center; gap: 3px; height: 16px; white-space: nowrap; }
.leaf::before { content: ""; width: 9px; border-top: 1px dotted #a5a294; }
.leaf span { padding: 0 1px; }
.leaf .current { background: #ece9d8; }
.leaf .picked { padding-right: 5px; background: #316ac5; }
.gear { width: 12px; height: 12px; margin-right: 3px; }
.parts::before { display: none; }
.fresh {
  align-self: flex-start;
  margin-left: -3px;
  background: #ffe800;
  font: italic bold 9px/9px "Liberation Sans", sans-serif;
}

/* drawing area */
.stage { display: flex; flex-direction: column; min-height: 0; }
.canvas { flex: 1; min-height: 0; background: #000; }
.drawing { display: block; width: 100%; height: 100%; }
.mark { fill: #ddd; font: 16px "Open Sans", sans-serif; }

/* property editor window */
.dialog {
  position: absolute;
  top: 218px;
  bottom: 0;
  left: 204px;
  display: flex;
  flex-direction: column;
  width: 444px;
  padding: 0 5px 0 4px;
  background: #7587dd;
  border-left: 1px solid #5560c0;
}
.dialog-title {
  display: flex;
  align-items: center;
  justify-content: space-between;
  height: 22px;
  border-top: 1px solid #9db8ee;
  background: linear-gradient(#8aa5ea, #7b95e2 30%, #84a6ea 85%, #6f87d8);
  color: #dce6fb;
  font-size: 13px;
  font-weight: bold;
}
.close {
  display: grid;
  place-items: center;
  width: 13px;
  height: 13px;
  padding: 0;
  border: 1px solid #e6d6ea;
  background: #b5647c;
  color: #fff;
}
.sheet { flex: 1; padding-right: 2px; background: #fff; }
.props { width: 100%; border-collapse: separate; border-spacing: 0; table-layout: fixed; }
.c-num { width: 22px; }
.c-name { width: 121px; }
.c-add { width: 31px; }
.props th, .props td {
  height: 19px;
  padding: 0 0 0 1px;
  border: solid #c0c0c0;
  border-width: 0 1px 1px 0;
  line-height: 16px;
  font-weight: normal;
  white-space: nowrap;
  text-align: left;
}
.props th { padding: 0; background: linear-gradient(to right, #fff, #efecdd); text-align: center; }
.props thead th { height: 24px; background: linear-gradient(#fff, #ebe8d9); }
.props thead .hot { background: linear-gradient(#f9d798, #f2c068); color: #600040; }
.props td:nth-child(2) { padding-left: 20px; }
.props td:nth-child(4) { padding: 0; }
.props .sel th { background: #fdd08a; color: #600060; }
.props .sel td:nth-child(2) { background: #316ac5; color: #fff; }
.props .sel td:nth-child(3) { background: #dfe9f5; }
.props .link { color: #00f; }
.props .group { color: #808080; }
.ind { padding-left: 3px; }
.rebar { width: 12px; height: 12px; vertical-align: -2px; }
.props input {
  display: block;
  width: 13px;
  height: 13px;
  margin: 0 auto;
  border: 1px solid #1c5180;
  background: linear-gradient(135deg, #dcdcd7, #fff);
  appearance: none;
}
.unfold {
  width: 13px;
  height: 13px;
  margin: 0 5px 0 -18px;
  padding: 0;
  border: 1px solid #b8b8b8;
  background: linear-gradient(#000, #000) center / 7px 1px no-repeat, linear-gradient(#000, #000) center / 1px 7px no-repeat, #f0f0f0;
  vertical-align: -2px;
}

/* red callouts */
.notes { position: absolute; top: 0; left: 0; width: 100%; height: 100%; pointer-events: none; }
```
